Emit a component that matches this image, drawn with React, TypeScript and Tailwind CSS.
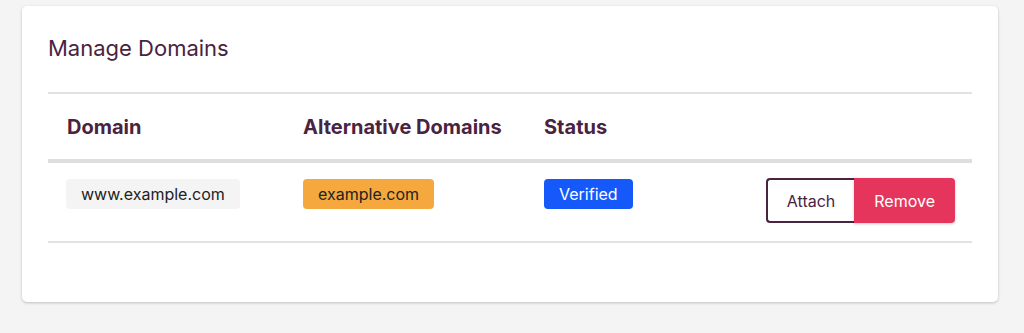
import React from 'react'

const font = { fontFamily: 'Inter, "Noto Sans", sans-serif' }

export default function App() {
  return (
    <div className="min-h-[333px] bg-[#f4f4f4] pt-[6px] pl-[22px] pr-[26px]" style={font}>
      <div className="h-[296px] rounded-[5px] bg-white px-[26px] pt-[28px] shadow-[0_1px_3px_rgba(0,0,0,0.22)]">
        <h2 className="text-[22px] leading-[28px] font-normal text-[#49233f]">Manage Domains</h2>

        <div className="mt-[30px] border-t-2 border-[#e2e2e2]">
          <div className="flex h-[69px] items-center border-b-4 border-[#dedede] text-[20px] font-bold text-[#49233f]">
            <div className="w-[237px] pl-[19px]">Domain</div>
            <div className="w-[241px] pl-[18px]">Alternative Domains</div>
            <div className="pl-[18px]">Status</div>
          </div>

          <div className="flex h-[80px] items-start border-b-2 border-[#e2e2e2] pt-[15px] text-[16px]">
            <div className="w-[237px] pl-[18px] pt-[1px]">
              <span className="inline-flex h-[30px] items-center rounded-[4px] bg-[#f4f4f4] px-[15px] text-[#222]">
                www.example.com
              </span>
            </div>
            <div className="w-[241px] pl-[18px] pt-[1px]">
              <span className="inline-flex h-[30px] items-center rounded-[4px] bg-[#f4a83d] px-[15px] text-[#222]">
                example.com
              </span>
            </div>
            <div className="flex-1 pl-[18px] pt-[1px]">
              <span className="inline-flex h-[30px] items-center rounded-[4px] bg-[#1559fb] px-[15px] text-white">
                Verified
              </span>
            </div>
            <div className="flex pr-[17px]">
              <button className="h-[45px] rounded-l-[4px] border-2 border-r-0 border-[#49233f] bg-white px-[19px] text-[#49233f]">
                Attach
              </button>
              <button className="h-[45px] rounded-r-[4px] bg-[#e6355c] px-[20px] text-white shadow-[0_1px_3px_rgba(0,0,0,0.2)]">
                Remove
              </button>
            </div>
          </div>
        </div>
      </div>
    </div>
  )
}
